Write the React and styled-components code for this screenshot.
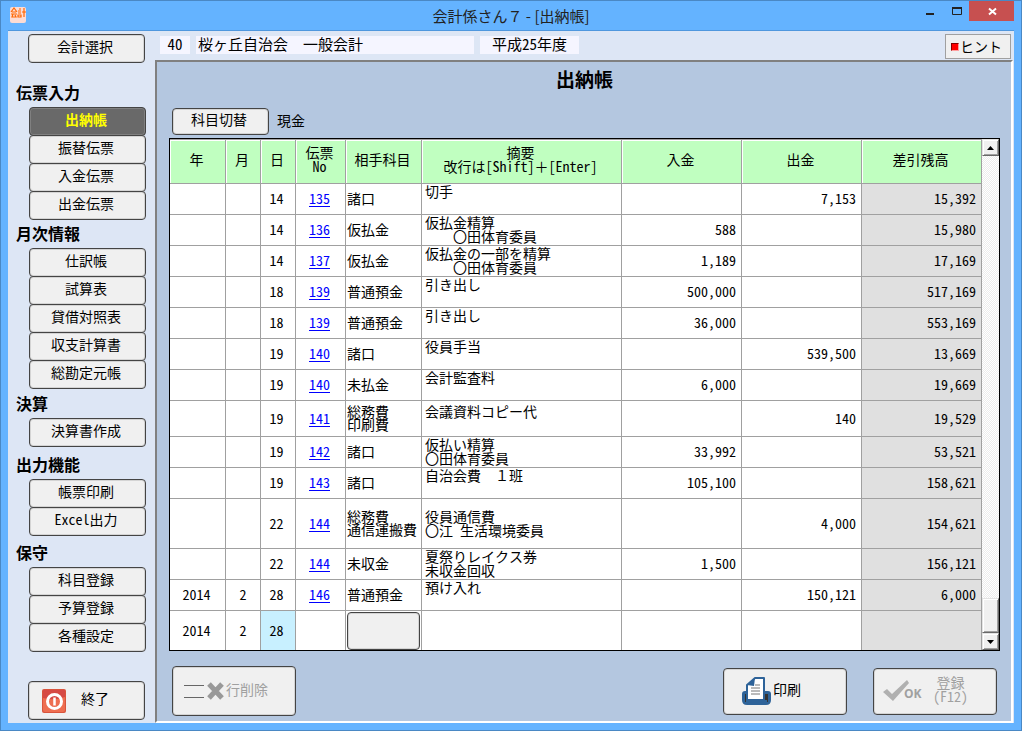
import { useState } from "react";
import styled, { createGlobalStyle, css } from "styled-components";

const GlobalStyle = createGlobalStyle`
  * {
    box-sizing: border-box;
  }
  body {
    margin: 0;
    font-family: "Noto Sans Mono CJK JP", "Noto Sans CJK JP", sans-serif;
    font-size: 14px;
    line-height: 14px;
    color: #000;
  }
  button,
  input {
    font-family: inherit;
    font-size: inherit;
    color: inherit;
  }
`;

const Window = styled.div`
  display: flex;
  flex-direction: column;
  min-height: 100vh;
  padding: 0 7px 7px;
  background-color: #64b3ff;
  border: 1px solid #4a88c4;
`;

const TitleBar = styled.header`
  display: grid;
  grid-template-columns: 1fr auto 1fr;
  height: 29px;
  h1 {
    margin: 0;
    font-family: "Noto Sans CJK JP", sans-serif;
    font-size: 15px;
    font-weight: normal;
    line-height: 30px;
    color: #222;
  }
`;

const AppIcon = styled.svg`
  width: 16px;
  height: 16px;
  margin: 6px 2px;
`;

const Controls = styled.div`
  display: flex;
  justify-content: flex-end;
  align-items: flex-start;
`;

const ControlButton = styled.button`
  width: ${({ $close }) => ($close ? "45px" : "27px")};
  height: 20px;
  padding: 0;
  border: none;
  background-color: ${({ $close }) => ($close ? "#c75050" : "transparent")};
  svg {
    display: block;
    margin: 0 auto;
  }
`;

const Client = styled.div`
  flex: 1;
  display: flex;
  background-color: #dde6f5;
  border-top: 1px solid #4f97de;
`;

const Sidebar = styled.nav`
  display: flex;
  flex-direction: column;
  width: 147px;
  flex-shrink: 0;
  padding: 3px 0 3px 20px;
`;

const Button = styled.button`
  display: flex;
  justify-content: center;
  align-items: center;
  padding: 0 3px 5px 0;
  background-color: #f0f0f0;
  border: 1px solid #444;
  border-radius: 4px;
  box-shadow: inset 0 0 0 1px #d4d4d4;
  line-height: 14px;
  &:disabled {
    color: #a0a0a0;
  }
`;

const SideButton = styled(Button)`
  width: 117px;
  height: 29px;
`;

const QuitButton = styled(Button)`
  width: 117px;
  height: 39px;
  margin-top: auto;
  padding: 0 18px 0 13px;
  justify-content: flex-start;
  gap: 15px;
  span {
    padding-bottom: 5px;
  }
`;

const Group = styled.section`
  margin-top: ${({ $gap }) => $gap}px;
  h2 {
    height: 28px;
    margin: 0 0 0 -12px;
    font-size: 16px;
    line-height: 26px;
  }
`;

const MenuButton = styled(Button)`
  width: 117px;
  height: 29px;
  margin: 0 0 0 1px;
  & + & {
    margin-top: -1px;
  }
  ${({ $active }) =>
    $active &&
    css`
      background-color: #696969;
      box-shadow: inset 0 0 0 1px #808080;
      color: #ff0;
      font-weight: 900;
    `}
`;

const Main = styled.div`
  flex: 1;
  min-width: 0;
  display: flex;
  flex-direction: column;
  padding: 0 1px 0 0;
`;

const InfoBar = styled.div`
  display: flex;
  align-items: flex-start;
  gap: 6px;
  height: 29px;
  padding: 5px 2px 0 5px;
`;

const Info = styled.div`
  width: ${({ $width }) => $width}px;
  height: 18px;
  padding: 0 2px;
  background-color: #f5f5ff;
  font-size: 15px;
  line-height: 15px;
  text-align: ${({ $align }) => $align || "center"};
`;

const HintButton = styled.button`
  display: flex;
  align-items: center;
  gap: 1px;
  width: 66px;
  height: 25px;
  margin: -2px 0 0 auto;
  padding: 0 5px;
  background-color: #f0f0f0;
  border: 1px solid #a0a0a0;
  span {
    padding-bottom: 2px;
  }
`;

const HintMark = styled.i`
  width: 8px;
  height: 8px;
  background-color: #f00;
  border: 1px solid;
  border-color: #800000 #ffa0a0 #ffa0a0 #800000;
`;

const Panel = styled.main`
  flex: 1;
  display: flex;
  flex-direction: column;
  padding: 0 11px 5px 12px;
  background-color: #b4c7e0;
  border: 2px solid;
  border-color: #808080 #fff #fff #808080;
`;

const PanelTitle = styled.h2`
  height: 36px;
  margin: 0;
  font-size: 19px;
  line-height: 34px;
  text-align: center;
`;

const Toolbar = styled.div`
  display: flex;
  align-items: center;
  gap: 8px;
  margin: 10px 0 3px 3px;
  > span {
    padding-bottom: 3px;
  }
`;

const SwitchButton = styled(Button)`
  width: 97px;
  height: 27px;
`;

const Ledger = styled.div`
  display: flex;
  border: 1px solid #000;
  background-color: #fff;
`;

const Table = styled.table`
  flex: 1;
  width: 100%;
  min-width: 0;
  table-layout: fixed;
  border-collapse: separate;
  border-spacing: 0;
  background-color: #fff;
`;

const HeadCell = styled.th`
  width: ${({ $width }) => ($width ? `${$width}px` : "auto")};
  height: 45px;
  padding: 0 2px 5px 0;
  background-color: #c0ffc0;
  border-top: 1px solid #a0a0a0;
  border-right: 1px solid #a0a0a0;
  border-bottom: 1px solid #a0a0a0;
  box-shadow: inset 1px 1px 0 #fff;
  font-weight: normal;
  white-space: pre-line;
`;

const Row = styled.tr`
  height: ${({ $height }) => $height}px;
  &:last-child td {
    border-bottom: none;
  }
`;

const Cell = styled.td`
  padding: ${({ $pad }) => $pad || "0 0 2px"};
  border-right: 1px solid #a0a0a0;
  border-bottom: 1px solid #a0a0a0;
  background-color: ${({ $bg }) => $bg || "transparent"};
  text-align: ${({ $align }) => $align || "center"};
  a {
    color: #00f;
    text-underline-offset: 2px;
  }
`;

const Account = styled.div`
  line-height: 13px;
  white-space: pre;
`;

const Summary = styled.div`
  min-height: 28px;
  white-space: pre;
`;

const AccountButton = styled(Button)`
  width: 73px;
  height: 38px;
  margin: 0 auto;
`;

const ScrollBar = styled.div`
  display: flex;
  flex-direction: column;
  width: 17px;
  flex-shrink: 0;
  background: repeating-conic-gradient(#fff 0% 25%, #ececec 0% 50%) 0 0 / 2px
    2px;
`;

const ScrollButton = styled.button`
  display: flex;
  justify-content: center;
  align-items: center;
  height: 17px;
  padding: 0;
  background-color: #f0f0f0;
  border: 1px solid;
  border-color: #e3e3e3 #696969 #696969 #e3e3e3;
  box-shadow: inset 1px 1px 0 #fff, inset -1px -1px 0 #a0a0a0;
`;

const ScrollThumb = styled.div`
  height: 35px;
  margin-top: auto;
  background-color: #f0f0f0;
  border: 1px solid;
  border-color: #e3e3e3 #696969 #696969 #e3e3e3;
  box-shadow: inset 1px 1px 0 #fff, inset -1px -1px 0 #a0a0a0;
`;

const Footer = styled.footer`
  display: flex;
  align-items: center;
  gap: 26px;
  margin: auto 3px 0;
`;

const ActionButton = styled(Button)`
  width: 124px;
  height: ${({ $tall }) => ($tall ? "50px" : "47px")};
  margin-right: ${({ $tall }) => ($tall ? "auto" : "0")};
  padding: 0 0 0 ${({ $left }) => $left}px;
  justify-content: flex-start;
  gap: ${({ $gap }) => $gap || 0}px;
  span {
    padding-bottom: 4px;
    white-space: pre-line;
  }
`;

const groups = [
  { title: "伝票入力", gap: 16, items: ["出納帳", "振替伝票", "入金伝票", "出金伝票"] },
  {
    title: "月次情報",
    gap: 0,
    items: ["仕訳帳", "試算表", "貸借対照表", "収支計算書", "総勘定元帳"],
  },
  { title: "決算", gap: 1, items: ["決算書作成"] },
  { title: "出力機能", gap: 4, items: ["帳票印刷", "Excel出力"] },
  { title: "保守", gap: 3, items: ["科目登録", "予算登録", "各種設定"] },
];

const columns = [
  { label: "年", width: 56 },
  { label: "月", width: 35 },
  { label: "日", width: 35 },
  { label: "伝票\nNo", width: 50 },
  { label: "相手科目", width: 76 },
  { label: "摘要\n改行は[Shift]＋[Enter]" },
  { label: "入金", width: 120 },
  { label: "出金", width: 120 },
  { label: "差引残高", width: 120 },
];

const rows = [
  { day: "14", no: "135", account: "諸口", summary: "切手", paid: "7,153", balance: "15,392" },
  { day: "14", no: "136", account: "仮払金", summary: "仮払金精算\n　　〇田体育委員", received: "588", balance: "15,980" },
  { day: "14", no: "137", account: "仮払金", summary: "仮払金の一部を精算\n　　〇田体育委員", received: "1,189", balance: "17,169" },
  { day: "18", no: "139", account: "普通預金", summary: "引き出し", received: "500,000", balance: "517,169" },
  { day: "18", no: "139", account: "普通預金", summary: "引き出し", received: "36,000", balance: "553,169" },
  { day: "19", no: "140", account: "諸口", summary: "役員手当", paid: "539,500", balance: "13,669" },
  { day: "19", no: "140", account: "未払金", summary: "会計監査料", received: "6,000", balance: "19,669" },
  { day: "19", no: "141", account: "総務費\n印刷費", summary: "会議資料コピー代", paid: "140", balance: "19,529", height: 36 },
  { day: "19", no: "142", account: "諸口", summary: "仮払い精算\n〇田体育委員", received: "33,992", balance: "53,521" },
  { day: "19", no: "143", account: "諸口", summary: "自治会費　１班", received: "105,100", balance: "158,621" },
  { day: "22", no: "144", account: "総務費\n通信運搬費", summary: "役員通信費\n〇江 生活環境委員", paid: "4,000", balance: "154,621", height: 50 },
  { day: "22", no: "144", account: "未収金", summary: "夏祭りレイクス券\n未収金回収", received: "1,500", balance: "156,121" },
  { year: "2014", month: "2", day: "28", no: "146", account: "普通預金", summary: "預け入れ", paid: "150,121", balance: "6,000" },
];

export default function App() {
  const [active, setActive] = useState("出納帳");

  return (
    <>
      <GlobalStyle />
      <Window>
        <TitleBar>
          <AppIcon viewBox="0 0 16 16" aria-hidden="true">
            <rect width="16" height="16" rx="2" fill="#fcdcd4" />
            <path
              d="M1 5 4 1l3 4M2 5h4M1 7h6M3 7 2 10h4L5 8M9 2h2M8 4h3M8 6h3M8 8h3v2H8zM12 5h4M14 1v9"
              fill="none"
              stroke="#f60"
              strokeWidth="1.2"
            />
          </AppIcon>
          <h1>会計係さん７ - [出納帳]</h1>
          <Controls>
            <ControlButton aria-label="最小化">
              <svg width="27" height="20">
                <rect x="11" y="12" width="8" height="2" fill="#222" />
              </svg>
            </ControlButton>
            <ControlButton aria-label="最大化">
              <svg width="27" height="20">
                <path d="M10.500 7v6.500h9V7" fill="none" stroke="#222" />
                <path d="M10 7h10" stroke="#222" strokeWidth="2" />
              </svg>
            </ControlButton>
            <ControlButton $close aria-label="閉じる">
              <svg width="45" height="20">
                <path d="m20 7.500 7 6m0-6-7 6" stroke="#fff" strokeWidth="2" />
              </svg>
            </ControlButton>
          </Controls>
        </TitleBar>
        <Client>
          <Sidebar>
            <SideButton>会計選択</SideButton>
            {groups.map((group) => (
              <Group key={group.title} $gap={group.gap}>
                <h2>{group.title}</h2>
                {group.items.map((item) => (
                  <MenuButton
                    key={item}
                    $active={item === active}
                    onClick={() => setActive(item)}
                  >
                    {item}
                  </MenuButton>
                ))}
              </Group>
            ))}
            <QuitButton>
              <svg width="24" height="24" viewBox="0 0 24 24" aria-hidden="true">
                <rect width="24" height="24" rx="2" fill="#d9543c" />
                <rect x="1" y="1" width="22" height="22" rx="2" fill="#ee6e50" />
                <path d="M1 1h22v7Q12 12 1 9z" fill="#d64a44" />
                <circle cx="12.500" cy="12.500" r="7" fill="none" stroke="#fff" strokeWidth="3" />
                <path d="M12.500 8.500v8" stroke="#fff" strokeWidth="2.500" />
              </svg>
              <span>終了</span>
            </QuitButton>
          </Sidebar>
          <Main>
            <InfoBar>
              <Info $width={30}>40</Info>
              <Info $width={278} $align="left">
                桜ヶ丘自治会　一般会計
              </Info>
              <Info $width={99}>平成25年度</Info>
              <HintButton>
                <HintMark />
                <span>ヒント</span>
              </HintButton>
            </InfoBar>
            <Panel>
              <PanelTitle>出納帳</PanelTitle>
              <Toolbar>
                <SwitchButton>科目切替</SwitchButton>
                <span>現金</span>
              </Toolbar>
              <Ledger>
                <Table>
                  <thead>
                    <tr>
                      {columns.map((column) => (
                        <HeadCell key={column.label} $width={column.width}>
                          {column.label}
                        </HeadCell>
                      ))}
                    </tr>
                  </thead>
                  <tbody>
                    {rows.map((row, index) => (
                      <Row key={index} $height={row.height || 31}>
                        <Cell $pad="0 2px 2px 0">{row.year}</Cell>
                        <Cell>{row.month}</Cell>
                        <Cell $pad="0 3px 2px 0">{row.day}</Cell>
                        <Cell $pad="0 2px 2px 0">
                          <a href={`#${row.no}`}>{row.no}</a>
                        </Cell>
                        <Cell $align="left" $pad="0 0 2px 1px">
                          <Account>{row.account}</Account>
                        </Cell>
                        <Cell $align="left" $pad="0 0 2px 3px">
                          <Summary>{row.summary}</Summary>
                        </Cell>
                        <Cell $align="right" $pad="0 5px 2px 0">{row.received}</Cell>
                        <Cell $align="right" $pad="0 5px 2px 0">{row.paid}</Cell>
                        <Cell $align="right" $pad="0 5px 2px 0" $bg="#e0e0e0">
                          {row.balance}
                        </Cell>
                      </Row>
                    ))}
                    <Row $height={39}>
                      <Cell $pad="0 2px 2px 0">2014</Cell>
                      <Cell>2</Cell>
                      <Cell $pad="0 3px 2px 0" $bg="#c8f0ff">
                        28
                      </Cell>
                      <Cell />
                      <Cell $pad="0 1px 0 0">
                        <AccountButton aria-label="相手科目" />
                      </Cell>
                      <Cell />
                      <Cell />
                      <Cell />
                      <Cell $bg="#e0e0e0" />
                    </Row>
                  </tbody>
                </Table>
                <ScrollBar>
                  <ScrollButton aria-label="上へ">
                    <svg width="7" height="4">
                      <path d="M0 4 3.500 0 7 4z" />
                    </svg>
                  </ScrollButton>
                  <ScrollThumb />
                  <ScrollButton aria-label="下へ">
                    <svg width="7" height="4">
                      <path d="M0 0h7L3.500 4z" />
                    </svg>
                  </ScrollButton>
                </ScrollBar>
              </Ledger>
              <Footer>
                <ActionButton $tall $left={11} disabled>
                  <svg width="42" height="22" viewBox="0 0 42 22" aria-hidden="true">
                    <path d="M0 5.500h20M0 17.500h20" stroke="#666" />
                    <path
                      d="m25 4 13 14m0-14L25 18"
                      stroke="#999"
                      strokeWidth="5"
                      strokeLinejoin="round"
                    />
                  </svg>
                  <span>行削除</span>
                </ActionButton>
                <ActionButton $left={18} $gap={2}>
                  <svg width="29" height="29" viewBox="0 0 29 29" aria-hidden="true">
                    <path
                      d="M0 17q0-3 3-3h23q3 0 3 3v6q0 5-5 5H5q-5 0-5-5z"
                      fill="#2e6399"
                    />
                    <path d="M3 17h23v8H3z" fill="#333" />
                    <path
                      d="M5 8l8-7h9v22H5z"
                      fill="#fff"
                      stroke="#2e6399"
                      strokeWidth="2"
                      strokeLinejoin="round"
                    />
                    <path d="M5 8l8-7-1 8z" fill="#2e6399" />
                    <path d="M13 8h5M9 11h9M9 14h9M9 17h9" stroke="#777" />
                    <path d="M4 23h21v3H4z" fill="#2e6399" />
                  </svg>
                  <span>印刷</span>
                </ActionButton>
                <ActionButton $left={9} $gap={10} disabled>
                  <svg width="40" height="24" viewBox="0 0 40 24" aria-hidden="true">
                    <path d="m0 13 4-3 5 5L24 1l2 3L10 22z" fill="#b0b0b0" />
                    <text
                      x="21"
                      y="19"
                      fill="#a0a0a0"
                      fontFamily="Open Sans, sans-serif"
                      fontSize="12"
                      fontWeight="700"
                    >
                      OK
                    </text>
                  </svg>
                  <span>登録{"\n"}(F12)</span>
                </ActionButton>
              </Footer>
            </Panel>
          </Main>
        </Client>
      </Window>
    </>
  );
}
